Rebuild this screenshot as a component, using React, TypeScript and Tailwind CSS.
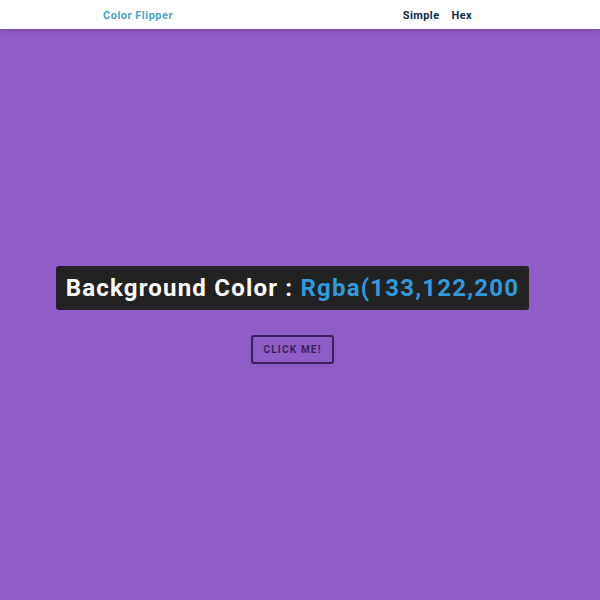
export default function App() {
  return (
    <div className="flex h-[600px] flex-col bg-[#8f5bc7] font-['Roboto',sans-serif]">
      <nav className="flex h-[29px] shrink-0 items-center justify-between bg-white pl-[103px] pr-[128px] pt-[3px] shadow-[0_1px_4px_rgba(0,0,0,0.25)]">
        <h4 className="text-[11px] font-bold tracking-[0.5px] text-[#49a6c6]">Color Flipper</h4>
        <ul className="flex gap-[12px] text-[11px] font-bold tracking-[0.4px] text-[#102a42]">
          <li>Simple</li>
          <li>Hex</li>
        </ul>
      </nav>

      <main className="flex flex-1 flex-col items-center justify-center gap-[25px] pr-[15px]">
        <h2 className="rounded-[3px] bg-[#222222] px-[10px] py-[7px] text-[24px] font-bold leading-[30px] tracking-[1.2px] text-white">
          Background Color : <span className="text-[#3199dc]">Rgba(133,122,200</span>
        </h2>
        <button className="rounded-[3px] border-2 border-[#3b2160] px-[10px] py-[5px] text-[10px] font-bold tracking-[1.2px] text-[#3b2160]">
          CLICK ME!
        </button>
      </main>
    </div>
  );
}
